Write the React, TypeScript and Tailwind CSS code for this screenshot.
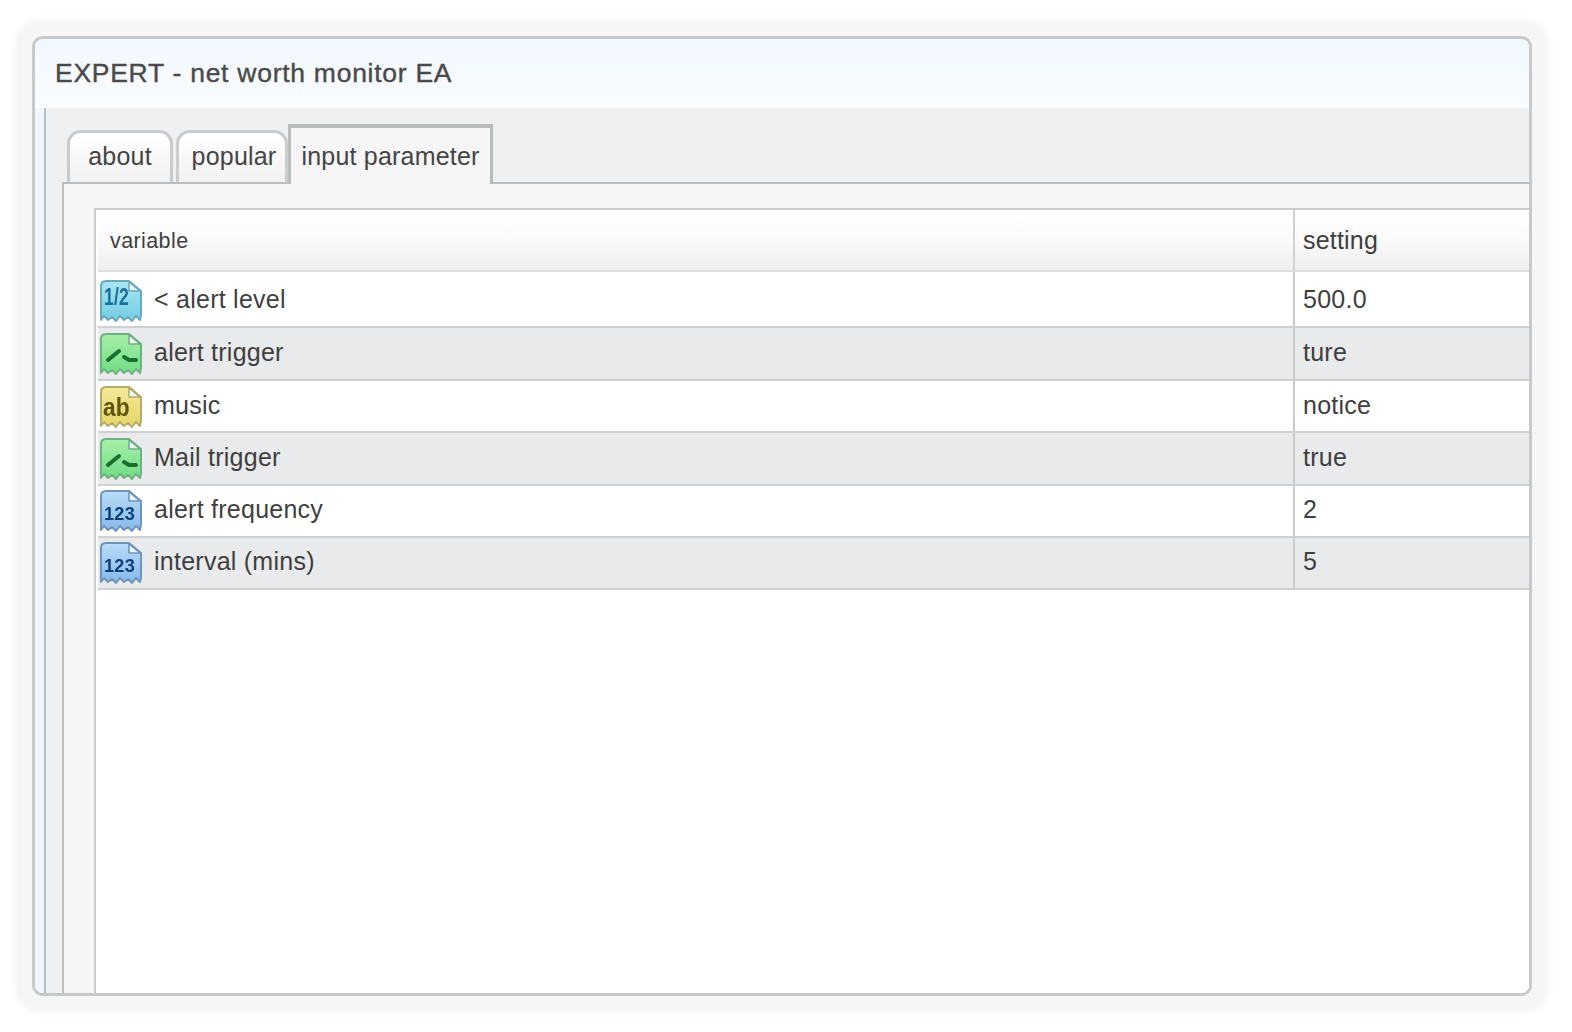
import React from "react";

type Kind = "half" | "bool" | "text" | "num";

const palette: Record<Kind, { a: string; b: string; edge: string; ink: string }> = {
  half: { a: "#a9e6f2", b: "#73cde3", edge: "#6aa9bb", ink: "#1c6f9c" },
  bool: { a: "#a8f0a8", b: "#6fdc85", edge: "#6fb082", ink: "#16702f" },
  text: { a: "#f4e89a", b: "#e4d566", edge: "#b5aa6a", ink: "#5f5510" },
  num: { a: "#b9dcf8", b: "#86b9ea", edge: "#6f94ba", ink: "#0f3f78" },
};

function TypeIcon({ kind }: { kind: Kind }) {
  const c = palette[kind];
  const id = `g-${kind}`;
  return (
    <svg width="44" height="46" viewBox="0 0 44 46" className="shrink-0 blur-[0.5px]">
      <defs>
        <linearGradient id={id} x1="0" y1="0" x2="0" y2="1">
          <stop offset="0" stopColor={c.a} />
          <stop offset="1" stopColor={c.b} />
        </linearGradient>
      </defs>
      <g transform="translate(0 2)">
        <path
          d="M7 2H30L42 12V36L41 41L37 37L33 42L29 38L25 41L21 37L17 42L13 38L9 41L5 37L2 41V7Q2 2 7 2Z"
          fill={`url(#${id})`}
          stroke={c.edge}
          strokeWidth="2"
          strokeLinejoin="round"
        />
        <path d="M30 3V12H41Z" fill="#eef6f8" stroke={c.edge} strokeWidth="1.5" strokeLinejoin="round" />
        {kind === "half" && (
          <text x="5" y="26" fontSize="24" fontWeight="700" fontFamily="'Liberation Sans',sans-serif" fill={c.ink} textLength="25" lengthAdjust="spacingAndGlyphs">
            1/2
          </text>
        )}
        {kind === "bool" && (
          <g fill="none" stroke={c.ink} strokeWidth="4" strokeLinecap="round">
            <path d="M9 28L20 19" />
            <path d="M25 25L30 28H37" />
          </g>
        )}
        {kind === "text" && (
          <text x="4" y="31" fontSize="25" fontWeight="700" fontFamily="'Liberation Sans',sans-serif" fill={c.ink} textLength="27" lengthAdjust="spacingAndGlyphs">
            ab
          </text>
        )}
        {kind === "num" && (
          <text x="5" y="31" fontSize="19" fontWeight="700" fontFamily="'Liberation Sans',sans-serif" fill={c.ink} textLength="31" lengthAdjust="spacingAndGlyphs">
            123
          </text>
        )}
      </g>
    </svg>
  );
}

const rows: { kind: Kind; name: string; value: string; h: string; nudge: string }[] = [
  { kind: "half", name: "< alert level", value: "500.0", h: "h-[56px]", nudge: "pt-[2px]" },
  { kind: "bool", name: "alert trigger", value: "ture", h: "h-[53px]", nudge: "pb-[2px]" },
  { kind: "text", name: "music", value: "notice", h: "h-[52px]", nudge: "" },
  { kind: "bool", name: "Mail trigger", value: "true", h: "h-[53px]", nudge: "pb-[2px]" },
  { kind: "num", name: "alert frequency", value: "2", h: "h-[52px]", nudge: "pb-[2px]" },
  { kind: "num", name: "interval (mins)", value: "5", h: "h-[52px]", nudge: "pb-[2px]" },
];

function Tab({ label, active, className }: { label: string; active?: boolean; className: string }) {
  return (
    <div
      className={
        active
          ? `flex items-center justify-center bg-[#f6f6f6] border-x-[3px] border-t-[4px] border-[#b9bcbd] -mb-[2px] relative ${className}`
          : `flex items-center justify-center rounded-t-[14px] bg-gradient-to-b from-white to-[#f1f1f1] border-x-[3px] border-t-[3px] border-[#c9cbcc] ${className}`
      }
    >
      {label}
    </div>
  );
}

export default function App() {
  return (
    <div className="w-[1572px] h-[1032px] bg-white pt-[36px] pl-[32px] font-['Liberation_Sans',sans-serif] text-[#3f3f3f] overflow-hidden">
      <div className="w-[1500px] h-[960px] rounded-[11px] border-[3px] border-[#c8c9c9] bg-white flex flex-col shadow-[0_0_6px_18px_#f6f6f6] [overflow:clip]">
        <div className="h-[69px] shrink-0 pl-[20px] pt-[17px] bg-gradient-to-b from-[#f1f8fe] to-[#fafcfe] text-[26.5px] leading-[34px] text-[#4a4a4a] [-webkit-text-stroke:0.4px_#4a4a4a] tracking-[0.73px]">
          EXPERT - net worth monitor EA
        </div>
        <div className="flex-1 min-h-0 flex bg-[#f0f6fc]">
          <div className="w-[9px] shrink-0" />
          <div className="flex-1 min-w-0 flex flex-col bg-[#eff0f1] border-l-[2px] border-[#b4c0c6] pl-[16px]">
            <div className="h-[74px] shrink-0 flex items-end pl-[5px] text-[25px] text-[#444] tracking-[0.2px]">
              <Tab label="about" className="w-[106px] h-[52px] mr-[3px] pb-[1px]" />
              <Tab label="popular" className="w-[112px] h-[52px] pl-[4px] pb-[1px]" />
              <Tab label="input parameter" active className="w-[205px] h-[60px] pt-[2px]" />
            </div>
            <div className="flex-1 min-h-0 border-t-[2px] border-l-[2px] border-[#bcbebf] bg-[#f6f6f6] pl-[30px] pt-[24px]">
              <div className="h-full border-t-[2px] border-l-[2px] border-[#cacccd] bg-white pl-[2px]">
                <div className="h-[60px] grid grid-cols-[1197px_1fr] items-center bg-gradient-to-b from-white via-[#fafafa] to-[#eeeeef] border-b-[2px] border-[#dcdddd] box-content">
                  <div className="pl-[12px] pt-[2px] h-full flex items-center text-[21.5px] tracking-[0.4px] border-r-[2px] border-[#d0d1d2]">
                    variable
                  </div>
                  <div className="pl-[8px] pt-[2px] text-[25px] tracking-[0.2px]">setting</div>
                </div>
                {rows.map((r, i) => (
                  <div
                    key={i}
                    className={`${r.h} grid grid-cols-[1197px_1fr] border-b-[2px] border-[#cfd0d1] text-[25px] tracking-[0.25px] ${
                      i % 2 ? "bg-[#e9eaeb]" : "bg-white"
                    }`}
                  >
                    <div className={`flex items-center gap-[11px] pl-[1px] border-r-[2px] border-[#c9cacb] ${r.nudge}`}>
                      <TypeIcon kind={r.kind} />
                      <span>{r.name}</span>
                    </div>
                    <div className={`flex items-center pl-[8px] ${r.nudge}`}>{r.value}</div>
                  </div>
                ))}
              </div>
            </div>
          </div>
        </div>
      </div>
    </div>
  );
}
